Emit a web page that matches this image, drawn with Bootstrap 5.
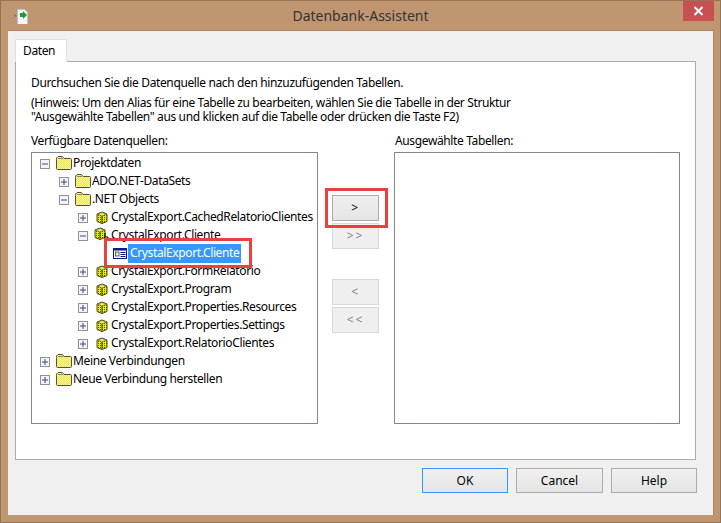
<!DOCTYPE html>
<html lang="de"><head><meta charset="utf-8"><title>Datenbank-Assistent</title>
<link href="https://cdn.jsdelivr.net/npm/bootstrap@5.3.0/dist/css/bootstrap.min.css" rel="stylesheet">
<style>
html,body{margin:0;width:721px;height:523px;overflow:hidden;background:#c09670}
body{font:12px/16px "Noto Sans","Open Sans",sans-serif;color:#000;letter-spacing:-.37px}
.win{position:relative;width:721px;height:523px;background:#c09670;border:1px solid #957455;display:flex;flex-direction:column;padding:29px 6px 7px 7px}
.ttl{position:absolute;top:5px;left:0;width:100%;text-align:center;font-size:14px;line-height:20px;color:#333;letter-spacing:0}
.appic{position:absolute;left:12px;top:7px}
.cls{position:absolute;right:6px;top:0;width:31px;height:20px;background:#c75050;display:flex;align-items:center;justify-content:center}
.client{flex:1;background:#f0f0f0;padding:8px 16px 0 7px;border-right:1px solid #a98560;border-top:1px solid #a98560;display:flex;flex-direction:column}
.tabs{border:0;margin:0}
.tabs .nav-link{border:1px solid #acacac;border-bottom:0;border-radius:0;background:#fff;color:#000;padding:0 7px;height:23px;width:52px;line-height:22px;font-size:12px;margin:0 0 -1px 0;position:relative;z-index:1}
.pane{height:399px;margin-right:1px;background:#fff;border:1px solid #acacac;padding:12px 15px 0;display:flex;flex-direction:column}
.pane p{margin:0}
.l1{height:18px;line-height:18px}
.l2{margin-top:4px!important;line-height:14px}
.heads{margin-top:9px;height:19px;line-height:16px;display:flex}
.heads div:first-child{width:364px}
.lists{display:flex;height:272px}
.box{width:288px;background:#fff;border:1px solid #828790;padding:1px 0 0 0}
.box.rgt{width:287px}
.mid{width:76px;padding:43px 0 0 14px;display:flex;flex-direction:column}
.ws{display:block;width:47px;height:26px;padding:0;border:1px solid #acacac;border-radius:0;background:linear-gradient(#f0f0f0,#e5e5e5);color:#000;font-size:12px;line-height:20px;margin-bottom:2px;opacity:1;letter-spacing:2px}
.ws:disabled{background:#efefef;border-color:#d9d9d9;color:#838383;opacity:1}
.gap{margin-top:28px}
.row-t{display:flex;align-items:center;height:18px;white-space:nowrap}
.lv0{padding-left:8px}.lv1{padding-left:27px}.lv2{padding-left:46px}.lv3{padding-left:81px}
.exp{width:10px;height:10px;flex:none;margin-right:6px;margin-top:1px}
.lv2 .exp{margin-right:8px}
.fold{width:16px;height:14px;flex:none;margin-right:1px}
.cube{width:12px;height:13px;flex:none;margin-right:3px}
.cube.drag{margin:-4px 5px 0 -2px}
.tbl{width:14px;height:11px;flex:none;margin-right:0;margin-top:1px}
.sel{background:#3399ff;color:#fff;padding:0 2px;height:19px;line-height:18px;margin-left:1px}
.foot{display:flex;justify-content:flex-end;padding-top:8px;gap:8px}
.fb{width:87px;height:25px;padding:0;border:1px solid #acacac;border-radius:0;background:linear-gradient(#f0f0f0,#e5e5e5);color:#000;font-size:12px;line-height:21px}
.fb.def{border-color:#3399ff;width:86px}
.fb.hlp{width:86px}
.redb{position:absolute;border:3px solid #e8423f;pointer-events:none}
.rb1{left:324px;top:187px;width:63px;height:40px}
.rb2{left:103px;top:237px;width:148px;height:30px}
.curs{position:absolute;left:103px;top:232px}
</style></head><body>
<svg width="0" height="0" class="position-absolute"><defs>
<symbol id="plus" viewBox="0 0 10 10"><rect x=".5" y=".5" width="9" height="9" fill="#f3f4f7" stroke="#919191"/><path d="M2 5h6M5 2v6" stroke="#3a4a7a"/></symbol>
<symbol id="minus" viewBox="0 0 10 10"><rect x=".5" y=".5" width="9" height="9" fill="#f3f4f7" stroke="#919191"/><path d="M2 5h6" stroke="#3a4a7a"/></symbol>
<pattern id="dith" width="2" height="2" patternUnits="userSpaceOnUse"><rect width="2" height="2" fill="#ffff55"/><rect width="1" height="1" fill="#e4dc90"/><rect x="1" y="1" width="1" height="1" fill="#e4dc90"/></pattern>
<pattern id="dc" width="2" height="2" patternUnits="userSpaceOnUse"><rect width="2" height="2" fill="#e8e820"/><rect width="1" height="1" fill="#5a5a20"/></pattern>
<symbol id="fold" viewBox="0 0 16 14"><path d="M.5 3.5V12.5a1 1 0 0 0 1 1H14.5a1 1 0 0 0 1-1V3.5a1 1 0 0 0-1-1H8L6.5.5H2L.5 2z" fill="url(#dith)" stroke="#55504a"/><path d="M2 2.5H7" stroke="#8a8478"/></symbol>
<symbol id="cube" viewBox="0 0 12 13"><path d="M1 3 6 1l5 2v7.5L6 12.5 1 10.5z" fill="url(#dc)" stroke="#4a4a22"/><path d="M1.5 3 6 5l4.5-2L6 1.5z" fill="#f0f070" stroke="#50501f" stroke-width=".6"/><path d="M6 5v7.5" stroke="#3c3c18"/></symbol>
<symbol id="tbl" viewBox="0 0 14 11"><rect x=".5" y=".5" width="13" height="10" fill="#fff" stroke="#0a1a8c"/><rect x="1" y="1" width="12" height="1.5" fill="#0a1a8c"/><rect x="2.5" y="4" width="3.5" height="4" fill="#ffff66" stroke="#0a1a8c" stroke-width=".7"/><path d="M7.5 4.5h5M7.5 6.5h5M7.5 8.5h5" stroke="#0a1a8c"/></symbol>
</defs></svg>
<div class="win">
  <svg class="appic" width="16" height="16" viewBox="0 0 16 16" aria-hidden="true"><path d="M4.5 1.5h7l3 3v12h-10z" fill="#f4f6fb" stroke="#b9c3d6"/><path d="M7 5h3v-2l4 4-4 4V9H7z" fill="#1f9c2e"/><path d="M1 6l3 2-2 1z" fill="#2f7fd8"/></svg>
  <div class="ttl">Datenbank-Assistent</div>
  <div class="cls"><svg width="11" height="10" viewBox="0 0 11 10" aria-hidden="true"><path d="M1.5 1 9.5 9M9.5 1 1.5 9" stroke="#fff" stroke-width="2"/></svg></div>
  <div class="client">
    <ul class="nav nav-tabs tabs"><li class="nav-item"><a class="nav-link active" href="#">Daten</a></li></ul>
    <div class="pane">
      <p class="l1">Durchsuchen Sie die Datenquelle nach den hinzuzufügenden Tabellen.</p>
      <p class="l2">(Hinweis: Um den Alias für eine Tabelle zu bearbeiten, wählen Sie die Tabelle in der Struktur<br>"Ausgewählte Tabellen" aus und klicken auf die Tabelle oder drücken die Taste F2)</p>
      <div class="heads"><div>Verfügbare Datenquellen:</div><div>Ausgewählte Tabellen:</div></div>
      <div class="lists">
        <div class="box">
          <div class="row-t lv0"><svg class="exp"><use href="#minus"/></svg><svg class="fold"><use href="#fold"/></svg>Projektdaten</div>
          <div class="row-t lv1"><svg class="exp"><use href="#plus"/></svg><svg class="fold"><use href="#fold"/></svg>ADO.NET-DataSets</div>
          <div class="row-t lv1"><svg class="exp"><use href="#minus"/></svg><svg class="fold"><use href="#fold"/></svg>.NET Objects</div>
          <div class="row-t lv2"><svg class="exp"><use href="#plus"/></svg><svg class="cube"><use href="#cube"/></svg>CrystalExport.CachedRelatorioClientes</div>
          <div class="row-t lv2"><svg class="exp"><use href="#minus"/></svg><svg class="cube drag"><use href="#cube"/></svg>CrystalExport.Cliente</div>
          <div class="row-t lv3"><svg class="tbl"><use href="#tbl"/></svg><span class="sel">CrystalExport.Cliente</span></div>
          <div class="row-t lv2"><svg class="exp"><use href="#plus"/></svg><svg class="cube"><use href="#cube"/></svg>CrystalExport.FormRelatorio</div>
          <div class="row-t lv2"><svg class="exp"><use href="#plus"/></svg><svg class="cube"><use href="#cube"/></svg>CrystalExport.Program</div>
          <div class="row-t lv2"><svg class="exp"><use href="#plus"/></svg><svg class="cube"><use href="#cube"/></svg>CrystalExport.Properties.Resources</div>
          <div class="row-t lv2"><svg class="exp"><use href="#plus"/></svg><svg class="cube"><use href="#cube"/></svg>CrystalExport.Properties.Settings</div>
          <div class="row-t lv2"><svg class="exp"><use href="#plus"/></svg><svg class="cube"><use href="#cube"/></svg>CrystalExport.RelatorioClientes</div>
          <div class="row-t lv0"><svg class="exp"><use href="#plus"/></svg><svg class="fold"><use href="#fold"/></svg>Meine Verbindungen</div>
          <div class="row-t lv0"><svg class="exp"><use href="#plus"/></svg><svg class="fold"><use href="#fold"/></svg>Neue Verbindung herstellen</div>
        </div>
        <div class="mid">
          <button class="btn ws" type="button">&gt;</button>
          <button class="btn ws" type="button" disabled>&gt;&gt;</button>
          <button class="btn ws gap" type="button" disabled>&lt;</button>
          <button class="btn ws" type="button" disabled>&lt;&lt;</button>
        </div>
        <div class="box rgt"></div>
      </div>
    </div>
    <div class="foot">
      <button class="btn fb def" type="button">OK</button>
      <button class="btn fb" type="button">Cancel</button>
      <button class="btn fb hlp" type="button">Help</button>
    </div>
  </div>
  <svg class="curs" width="6" height="9" viewBox="0 0 6 9" aria-hidden="true"><path d="M1 0v4h3v4M1 4 0 5" stroke="#000" fill="none"/></svg>
  <div class="redb rb1"></div>
  <div class="redb rb2"></div>
</div>
</body></html>
